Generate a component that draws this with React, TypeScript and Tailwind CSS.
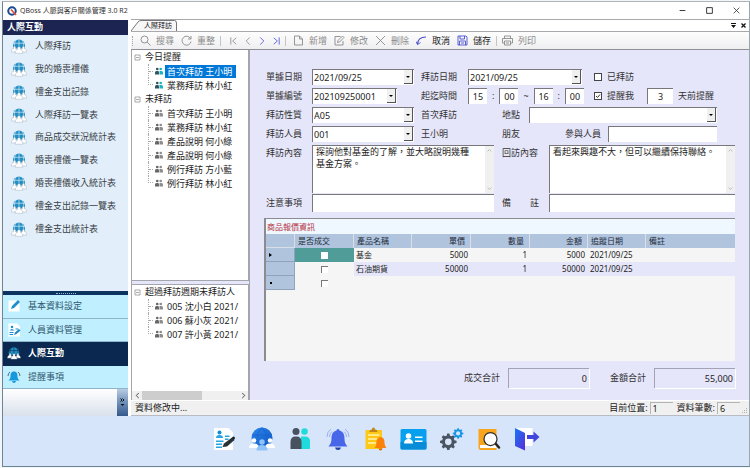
import React from "react";

const FONT = "font-['Noto_Sans','Noto_Sans_CJK_TC',sans-serif]";

/* ---------- icons ---------- */

function GlobeTeam({ className, globe = "#1f8fc4", people = "#ffffff", edge = "#9aa9b5", mesh = "#e3effb" }: { className: string; globe?: string; people?: string; edge?: string; mesh?: string }) {
  return (
    <svg viewBox="0 0 32 30" className={className} aria-hidden="true">
      <path d="M4 14a12 12 0 0 1 24 0v6H4z" fill={globe} />
      <path d="M16 2v14M4 9.500h24M10 3.500c-3 4-3 7-3 11M22 3.500c3 4 3 7 3 11" stroke={mesh} strokeWidth="1.300" fill="none" />
      <g fill={people} stroke={edge} strokeWidth=".9">
        <path d="M.5 27c0-5 2-6 4.500-7-2-6 6-6 4 0 2 1 4 2 4 7z" />
        <path d="M19 27c0-5 2-6 4-7-2-6 6-6 4 0 2.500 1 4.500 2 4.500 7z" />
        <path d="M8.500 29.500c0-6 2-6.500 5-8-3-7 8-7 5 0 3 1.500 5 2 5 8z" />
      </g>
    </svg>
  );
}

function Pair({ color }: { color?: boolean }) {
  return (
    <svg viewBox="0 0 16 16" className="h-2 w-2 shrink-0" aria-hidden="true">
      <g fill={color ? "#19b5bf" : "#8d8d8d"}>
        <circle cx="11.500" cy="4" r="2.700" />
        <path d="M9 8h4q3 0 3 3v4H9z" />
      </g>
      <g fill={color ? "#35525f" : "#666"}>
        <circle cx="4.500" cy="4" r="2.700" />
        <path d="M0 11q0-3 3-3h3q2 0 2 3v4H0z" />
      </g>
    </svg>
  );
}

function Line({ children, className = "h-[11px] w-[11px]" }: { children: React.ReactNode; className?: string }) {
  return (
    <svg viewBox="0 0 22 22" className={className + " shrink-0"} fill="none" stroke="currentColor" strokeWidth="1.800" aria-hidden="true">
      {children}
    </svg>
  );
}

const toolIcons = {
  search: <><circle cx="9" cy="9" r="7" /><path d="m14 14 7 7" /></>,
  refresh: <><path d="M19 7a9 9 0 1 0 1 6" /><path d="M20 2v6h-6" /></>,
  first: <><path d="M4 3v16M16 4l-8 7 8 7" /></>,
  prev: <path d="m15 3-8 8 8 8" />,
  next: <path d="m7 3 8 8-8 8" />,
  last: <><path d="M18 3v16M6 4l8 7-8 7" /></>,
  add: <><path d="M3 2h10l6 6v12H3z" /><path d="M13 2v6h6" /></>,
  edit: <><path d="M13 3H2v17h16v-8" /><path d="m7 15 1-4 9-9 3 3-9 9z" /></>,
  remove: <path d="m2 2 18 18M20 2 2 20" />,
  undo: <><path d="M3 19C3 9 9 4 20 4" strokeWidth="2.400" /><path d="m0 13 3 6 6-4" /></>,
  save: <><path d="M2 2h16l2 2v16H2z" /><path d="M6 2v6h9V2M5 20v-8h12v8M8 16h6" /></>,
  print: <><path d="M5 7V2h12v5M5 16H1V7h20v9h-4" /><path d="M5 12h12v8H5zM8 16h6" /></>,
};

/* ---------- data ---------- */

const menu = ["人際拜訪", "我的婚喪禮儀", "禮金支出記錄", "人際拜訪一覽表", "商品成交狀況統計表", "婚喪禮儀一覽表", "婚喪禮儀收入統計表", "禮金支出記錄一覽表", "禮金支出統計表"];
const pending = ["首次拜訪 王小明", "業務拜訪 林小紅", "產品說明 何小綠", "產品說明 何小綠", "例行拜訪 方小藍", "例行拜訪 林小紅"];
const overdue = ["005 沈小白 2021/", "006 蘇小灰 2021/", "007 許小黃 2021/"];
const products = [
  { name: "基金", price: "5000", qty: "1", total: "5000", date: "2021/09/25" },
  { name: "石油期貨", price: "50000", qty: "1", total: "50000", date: "2021/09/25" },
];

/* ---------- sidebar ---------- */

function Sidebar() {
  const groups = [
    {
      label: "基本資料設定",
      icon: <svg viewBox="0 0 28 28" className="h-3.5 w-3.5"><path d="M3 3h22v22H3z" fill="#fff" /><path d="m8 20 2-6L22 2l4 4-12 12z" fill="#1a8fd0" /></svg>,
    },
    {
      label: "人員資料管理",
      icon: <svg viewBox="0 0 28 28" className="h-3.5 w-3.5"><path d="M3 1h17l6 6v20H3z" fill="#fff" /><circle cx="10" cy="8" r="2.500" fill="#1a8fd0" /><path d="M5 15q5-6 10 0zM5 18h8v2H5zM5 22h7v2H5zM17 11h6v2h-6z" fill="#1a8fd0" /><path d="m14 24 2-5 8-7 3 3-8 7z" fill="#1c86c4" /></svg>,
    },
    {
      label: "人際互動",
      active: true,
      icon: <GlobeTeam className="h-3.5 w-3.5" edge="#0a2850" mesh="#0a2850" />,
    },
    {
      label: "提醒事項",
      icon: <svg viewBox="0 0 28 28" className="h-3.5 w-3.5"><path d="M14 3c6 0 7 5 7 10 0 4 2 6 4 8H3c2-2 4-4 4-8 0-5 1-10 7-10zM10 22h8q-1 4-4 4t-4-4z" fill="#1698dc" /><path d="M2 12q0-5 4-8M26 12q0-5-4-8" stroke="#4f6a7c" strokeWidth="2" fill="none" /></svg>,
    },
  ];
  return (
    <aside className="flex w-[125px] shrink-0 flex-col">
      <h2 className="mt-px h-[15px] bg-[#1c2552] px-1 text-[9px] font-bold leading-[14px] text-white">人際互動</h2>
      <nav className="flex flex-1 flex-col bg-[#e2effb]">
        <ul className="grid h-[205px] grid-rows-9">
          {menu.map((m) => (
            <li key={m} className="flex items-center">
              <a href="#" className="flex items-center gap-2 pl-2">
                <GlobeTeam className="h-4 w-4" />
                {m}
              </a>
            </li>
          ))}
        </ul>
      </nav>
      <div className="flex h-1 items-center justify-center bg-[#0b3560]">
        <div className="w-5 border-t border-dotted border-[#9db8d2]" />
      </div>
      <div className="grid h-[94px] grid-rows-4">
        {groups.map((g) => (
          <button
            key={g.label}
            className={
              "flex items-center gap-[7px] border-b pl-1 text-left " +
              (g.active ? "border-[#0a2850] bg-[#0a2850] font-bold text-white" : "border-[#8fb4cc] bg-[#c0f0ff] text-[#31576e]")
            }
          >
            {g.icon}
            {g.label}
          </button>
        ))}
      </div>
      <div className="flex h-[27px] justify-end bg-linear-to-b from-white to-[#d9e1ec]">
        <button aria-label="更多" className="flex w-[11px] items-center justify-center bg-linear-to-b from-[#b9cce4] via-[#6e8fb8] to-[#33588a]">
          <svg viewBox="0 0 10 18" className="h-[9px] w-[5px]"><path d="m1 1 3 3-3 3M5 1l3 3-3 3" stroke="#111" strokeWidth="2" fill="none" /><path d="M1 12h8l-4 4z" fill="#111" /></svg>
        </button>
      </div>
    </aside>
  );
}

/* ---------- tree ---------- */

function Branch({ title, items, color, selected }: { title: string; items: string[]; color?: boolean; selected?: number }) {
  return (
    <li>
      <div className="flex h-3.5 items-center gap-1 pl-0.5">
        <svg viewBox="0 0 14 14" className="h-[7px] w-[7px] shrink-0"><path d="M2 2h10v10H2zM4 7h6" fill="none" stroke="#8c8c8c" strokeWidth="1.500" /></svg>
        <span className="whitespace-nowrap text-[#222]">{title}</span>
      </div>
      <ul className="ml-4">
        {items.map((t, i) => (
          <li key={i} className="flex h-3.5 items-center">
            <span className={"flex w-[5px] shrink-0 flex-col border-l border-dotted border-[#aaa] " + (i === items.length - 1 ? "h-[7px] self-start border-b" : "h-full")}>
              {i < items.length - 1 && <span className="mt-[7px] border-t border-dotted border-[#aaa]" />}
            </span>
            <span className="ml-0.5 flex w-2.5 shrink-0"><Pair color={color} /></span>
            <button className={"h-[13px] whitespace-nowrap px-0.5 leading-[13px] " + (selected === i ? "bg-[#0078d7] pr-1 text-white" : "text-[#222]")}>{t}</button>
          </li>
        ))}
      </ul>
    </li>
  );
}

function Trees() {
  return (
    <div className="flex w-[119px] shrink-0 flex-col border-x border-[#a5a5ad] bg-[#e6e6fa]">
      <ul className="flex-1 overflow-hidden border-b border-r border-[#a5a5ad] bg-white">
        <Branch title="今日提醒" items={pending.slice(0, 2)} color selected={0} />
        <Branch title="未拜訪" items={pending} />
      </ul>
      <div className="mt-[3px] flex h-[116px] flex-col border-r border-t border-[#a5a5ad] bg-white">
        <ul className="flex-1 overflow-hidden">
          <Branch title="超過拜訪週期未拜訪人" items={overdue} />
        </ul>
        <div className="flex h-[9px] items-stretch bg-[#f0f0f0] text-[#444]">
          <button aria-label="向左捲動" className="flex w-2.5 items-center justify-center"><Line className="h-[7px] w-[7px]"><path d="m15 3-8 8 8 8" strokeWidth="3" /></Line></button>
          <div className="flex-1"><div className="h-full w-[63%] bg-[#cdcdcd]" /></div>
          <button aria-label="向右捲動" className="flex w-2.5 items-center justify-center"><Line className="h-[7px] w-[7px]"><path d="m7 3 8 8-8 8" strokeWidth="3" /></Line></button>
        </div>
      </div>
    </div>
  );
}

/* ---------- form controls ---------- */

const FIELD = "border-l border-t border-[#77777c] bg-white text-[#222] outline-none";

function Combo({ label, value, className }: { label: string; value: string; className: string }) {
  return (
    <div className={"relative h-4 " + className}>
      <select aria-label={label} defaultValue={value} className={"block h-full w-full appearance-none pl-px pr-2.5 " + FIELD}>
        <option>{value}</option>
      </select>
      <span className="pointer-events-none absolute bottom-px right-px top-px flex w-[9px] items-center justify-center border-b border-r border-[#555] bg-[#f0f0f0]">
        <span className="border-x-2 border-t-2 border-x-transparent border-t-black" />
      </span>
    </div>
  );
}

function Box({ label, value, className }: { label: string; value?: string; className: string }) {
  return <input aria-label={label} defaultValue={value} className={"h-4 min-w-0 " + FIELD + " " + className} />;
}

function Memo({ label, value }: { label: string; value: string }) {
  return (
    <div className={"flex h-12 min-w-0 flex-1 " + FIELD}>
      <textarea aria-label={label} defaultValue={value} className="block h-full min-w-0 flex-1 resize-none overflow-hidden pl-[3px] pr-2.5 leading-3 outline-none" />
      <div className="flex w-[9px] shrink-0 flex-col items-center justify-between bg-[#f0f0f0] py-0.5 text-[#a5a5a5]">
        <Line className="h-[5px] w-[7px]"><path d="m3 15 8-8 8 8" strokeWidth="3" /></Line>
        <Line className="h-[5px] w-[7px]"><path d="m3 7 8 8 8-8" strokeWidth="3" /></Line>
      </div>
    </div>
  );
}

function Check({ label, checked }: { label: string; checked?: boolean }) {
  return (
    <label className="flex items-center gap-[5px]">
      <span className="relative flex h-2 w-2">
        <input type="checkbox" defaultChecked={checked} className="peer block h-2 w-2 appearance-none border border-[#444] bg-white" />
        <svg viewBox="0 0 16 16" className="pointer-events-none absolute inset-0 hidden h-2 w-2 peer-checked:block"><path d="m4 8 3 3 5-6" fill="none" stroke="#333" strokeWidth="2" /></svg>
      </span>
      {label}
    </label>
  );
}

const LABEL = "w-[46px] shrink-0";
const ROW = "flex items-center";

function ProductTable() {
  const head = "border-r border-[#d9dfe8] font-normal";
  const side = "border-b border-r border-[#8fa3bd] bg-[#b0c4de]";
  return (
    <section className="-ml-0.5 mt-1.5 flex min-h-[143px] flex-1 flex-col border-l-2 border-t border-[#8b8b90] bg-[#f5f5f5] text-[8px] leading-3">
      <h3 className="h-[15px] bg-[#eff8ff] pl-px leading-[16px] text-[#b5303c]">商品報價資訊</h3>
      <table className="w-full table-fixed border-separate border-spacing-0">
        <colgroup>
          <col className="w-[29px]" />
          <col className="w-[59px]" />
          <col className="w-[58px]" />
          <col className="w-[59px]" />
          <col className="w-[59px]" />
          <col className="w-[58px]" />
          <col className="w-[58px]" />
          <col />
        </colgroup>
        <thead>
          <tr className="h-3.5 bg-[#b0c4de] text-left text-[#222b3a]">
            <th className={head + " border-b"} />
            <th className={head + " pl-[3px]"}>是否成交</th>
            <th className={head + " pl-[3px]"}>產品名稱</th>
            <th className={head + " pr-[5px] text-right"}>單價</th>
            <th className={head + " pr-[5px] text-right"}>數量</th>
            <th className={head + " pr-[5px] text-right"}>金額</th>
            <th className={head + " pl-[3px]"}>追蹤日期</th>
            <th className="pl-[3px] font-normal">備註</th>
          </tr>
        </thead>
        <tbody>
          {products.map((p, i) => (
            <tr key={p.name} className={"h-3.5 text-[#222] " + (i ? "bg-[#e6e6fa]" : "bg-[#f5f5f5]")}>
              <td className={side}>{i === 0 && <span className="ml-[3px] block w-0 border-y-2 border-l-[3px] border-y-transparent border-l-black" />}</td>
              <td className={i ? "bg-[#f5f5f5]" : "bg-[#4f9c98]"}>
                <input type="checkbox" aria-label={p.name + " 是否成交"} className={"mx-auto block h-[7px] w-[7px] appearance-none bg-white " + (i ? "border-l border-t border-[#777]" : "")} />
              </td>
              <td className="pl-0.5">{p.name}</td>
              <td className="pr-[3px] text-right">{p.price}</td>
              <td className="pr-[3px] text-right">{p.qty}</td>
              <td className="pr-[3px] text-right">{p.total}</td>
              <td className="pl-0.5">{p.date}</td>
              <td />
            </tr>
          ))}
          <tr className="h-3.5">
            <td className={side}><span className="ml-1 block h-0.5 w-0.5 bg-black" /></td>
            <td><input type="checkbox" aria-label="新列 是否成交" className="mx-auto block h-[7px] w-[7px] appearance-none border-l border-t border-[#777] bg-white" /></td>
            <td colSpan={6} />
          </tr>
        </tbody>
      </table>
    </section>
  );
}

function VisitForm() {
  const total = "h-5 w-[81px] border-l border-t border-[#a3a3b5] bg-[#e6e6fa] pr-0.5 text-right text-[#222] outline-none shadow-[1px_1px_0_#fff]";
  return (
    <form className="flex min-w-0 flex-1 flex-col bg-[#e6e6fa] pb-3 pl-4 pr-3.5 pt-[19px] text-[#333]">
      <div className="flex flex-col gap-[3px]">
        <div className={ROW}>
          <span className={LABEL}>單據日期</span>
          <Combo label="單據日期" value="2021/09/25" className="w-[102px]" />
          <span className="ml-[7px] w-[47px]">拜訪日期</span>
          <Combo label="拜訪日期" value="2021/09/25" className="w-[114px]" />
          <div className="ml-3"><Check label="已拜訪" /></div>
        </div>
        <div className={ROW}>
          <span className={LABEL}>單據編號</span>
          <Combo label="單據編號" value="202109250001" className="w-[85px]" />
          <span className="ml-6 w-[47px]">起迄時間</span>
          <div className="flex w-[116px] items-center justify-between">
            <Box label="起時" value="15" className="w-[19px] text-center" />:
            <Box label="起分" value="00" className="w-[19px] text-center" />~
            <Box label="迄時" value="16" className="w-[19px] text-center" />:
            <Box label="迄分" value="00" className="w-[19px] text-center" />
          </div>
          <div className="ml-2.5"><Check label="提醒我" checked /></div>
          <Box label="提醒天數" value="3" className="ml-[13px] w-[26px] text-center" />
          <span className="ml-[5px]">天前提醒</span>
        </div>
        <div className={ROW}>
          <span className={LABEL}>拜訪性質</span>
          <Combo label="拜訪性質" value="A05" className="w-[102px]" />
          <span className="ml-[7px] w-[81px]">首次拜訪</span>
          <span className="w-[27px]">地點</span>
          <Combo label="地點" value="" className="mr-[18px] min-w-0 flex-1" />
        </div>
        <div className={ROW}>
          <span className={LABEL}>拜訪人員</span>
          <Combo label="拜訪人員" value="001" className="w-[102px]" />
          <span className="ml-[7px] w-[81px]">王小明</span>
          <span className="w-[63px]">朋友</span>
          <span className="w-[43px]">參與人員</span>
          <Box label="參與人員" className="mr-[18px] flex-1" />
        </div>
        <div className="flex flex-col gap-px">
          <div className="flex items-start">
            <div className="flex w-[228px] items-start">
              <span className={LABEL}>拜訪內容</span>
              <Memo label="拜訪內容" value="探詢他對基金的了解，並大略說明幾種基金方案。" />
            </div>
            <div className="ml-2 flex min-w-0 flex-1 items-start">
              <span className="w-[47px] shrink-0">回訪內容</span>
              <Memo label="回訪內容" value="看起來興趣不大，但可以繼續保持聯絡。" />
            </div>
          </div>
          <div className="flex items-center">
            <div className="flex h-[18px] w-[228px] items-center">
              <span className={LABEL}>注意事項</span>
              <input aria-label="注意事項" className={"h-full min-w-0 flex-1 " + FIELD} />
            </div>
            <div className="ml-2 flex h-[18px] min-w-0 flex-1 items-center">
              <span className="flex w-[47px] shrink-0 justify-between pr-2.5"><span>備</span><span>註</span></span>
              <input aria-label="備註" className={"h-full min-w-0 flex-1 " + FIELD} />
            </div>
          </div>
        </div>
      </div>
      <ProductTable />
      <div className="mt-[7px] flex items-center justify-end">
        <label className="flex items-center gap-2">成交合計<input readOnly value="0" className={total} /></label>
        <label className="ml-[21px] flex items-center gap-2">金額合計<input readOnly value="55,000" className={total} /></label>
      </div>
    </form>
  );
}

/* ---------- toolbar ---------- */

function Tool({ icon, label, tone = "text-[#8b8b8b]", textTone = "text-[#8b8b8b]" }: { icon: React.ReactNode; label: string; tone?: string; textTone?: string }) {
  return (
    <button className="flex items-center gap-[5px]">
      <span className={tone}><Line>{icon}</Line></span>
      <span className={"whitespace-nowrap " + textTone}>{label}</span>
    </button>
  );
}

function Toolbar() {
  const sep = <span className="h-2.5 border-l border-[#c4c4c4]" />;
  const blue = "text-[#4a4fd0]";
  return (
    <div className="flex h-[18px] items-center gap-[7px] border-b border-[#8f8f96] bg-linear-to-b from-[#fdfdfd] to-[#efeff1] pl-px">
      <span className="h-2.5 border-l border-dotted border-[#a5a5a5]" />
      <Tool icon={toolIcons.search} label="搜尋" />
      <Tool icon={toolIcons.refresh} label="重整" />
      <div className="-ml-0.5 flex w-[66px] items-center justify-between">
        {sep}
        <button aria-label="第一筆" className="ml-1 text-[#8b8b8b]"><Line className="block h-2.5 w-2.5">{toolIcons.first}</Line></button>
        <button aria-label="上一筆" className="text-[#8b8b8b]"><Line className="block h-2.5 w-2.5">{toolIcons.prev}</Line></button>
        <button aria-label="下一筆" className={blue}><Line className="block h-2.5 w-2.5">{toolIcons.next}</Line></button>
        <button aria-label="最後一筆" className={blue}><Line className="block h-2.5 w-2.5">{toolIcons.last}</Line></button>
        {sep}
      </div>
      <Tool icon={toolIcons.add} label="新增" />
      <Tool icon={toolIcons.edit} label="修改" />
      <Tool icon={toolIcons.remove} label="刪除" />
      <Tool icon={toolIcons.undo} label="取消" tone={blue} textTone="text-[#222]" />
      <Tool icon={toolIcons.save} label="儲存" tone={blue} textTone="text-[#222]" />
      <div className="-ml-0.5 flex items-center gap-[5px]">
        {sep}
        <Tool icon={toolIcons.print} label="列印" />
      </div>
    </div>
  );
}

/* ---------- dock ---------- */

const GEAR = "M14 2h4l1 4 3 1 3-2 3 3-2 3 1 3 4 1v4l-4 1-1 3 2 3-3 3-3-2-3 1-1 4h-4l-1-4-3-1-3 2-3-3 2-3-1-3-4-1v-4l4-1 1-3-2-3 3-3 3 2 3-1zM16 11a6 6 0 1 0 0 12 6 6 0 0 0 0-12z";

const dock: { label: string; art: React.ReactNode }[] = [
  {
    label: "基本資料",
    art: <><path d="M4 2h29l9 9v35H4z" fill="#fff" /><circle cx="15" cy="11" r="4" fill="#0f8fd8" /><path d="M8 22q0-6 7-6t7 6zM8 27h15v3H8zM8 33h12v3H8zM8 39h12v3H8zM26 17h9v3h-9zM26 23h7v3h-7z" fill="#25a5e4" /><path d="m21 40 3-7 16-12 5 5-15 13z" fill="#263238" /><circle cx="43" cy="22" r="3" fill="#1c2429" /></>,
  },
  {
    label: "人際互動",
    art: <><defs><linearGradient id="globe" x1="0" y1="0" x2="1" y2="1"><stop offset="0" stopColor="#2c86ee" /><stop offset="1" stopColor="#0d56bf" /></linearGradient></defs><circle cx="24" cy="22" r="21" fill="url(#globe)" /><path d="M24 1q-11 10-10 22M24 1q10 10 10 22M4 16h40" stroke="#1b62cf" strokeWidth="1.500" fill="none" /><g fill="#fff"><circle cx="8" cy="27" r="4.500" /><path d="M-2 42q0-9 10-9t10 9z" /><circle cx="40" cy="27" r="4.500" /><path d="M30 42q0-9 10-9t10 9z" /></g><g fill="#8fc3f7"><circle cx="24" cy="30" r="5.500" /><path d="M13 47q0-11 11-11t11 11z" /></g></>,
  },
  {
    label: "人員",
    art: <><g fill="#1edbdc"><circle cx="33" cy="9" r="6.500" /><path d="M26 19h8q10 0 10 10v15H26z" /></g><g fill="#475160"><circle cx="16" cy="9" r="7" /><path d="M5 30q0-11 10-11h2q10 0 10 11v14H5z" /></g></>,
  },
  {
    label: "提醒",
    art: <><path d="M24 4q3 0 3 3c8 2 10 9 10 16 0 9 3 12 6 16H5c3-4 6-7 6-16 0-7 2-14 10-16q0-3 3-3z" fill="#4766e8" /><path d="M18 41h12q-1 5-6 5t-6-5z" fill="#2440a8" /><path d="M2 20q0-11 8-16M7 20q0-7 5-11M46 20q0-11-8-16M41 20q0-7-5-11" stroke="#92a7ee" strokeWidth="1.800" fill="none" /></>,
  },
  {
    label: "待辦提醒",
    art: <><path d="M3 6h33v38H3z" fill="#fdc916" /><path d="M11 10q0-5 5-5 0-4 3-4t3 4q5 0 5 5z" fill="#bf8416" /><path d="M8 16h23M8 24h23M8 32h16" stroke="#fff3b0" strokeWidth="3" /><path d="M33 20c7 1 8 6 8 11 0 6 2 8 4 11H21c2-3 4-5 4-11 0-5 1-10 8-11z" fill="#fb8108" /><path d="M29 43h8q-1 4-4 4t-4-4z" fill="#d66300" /></>,
  },
  {
    label: "名片",
    art: <><rect x="-3" y="4" width="52" height="41" rx="3" fill="#07a0ef" /><path d="M-3 30h52v12q0 3-3 3H0q-3 0-3-3z" fill="#078cd8" /><g fill="#fff"><circle cx="13" cy="18" r="5.500" /><path d="M4 33q0-9 9-9t9 9zM26 19h15v3H26zM26 27h15v3H26z" /></g></>,
  },
  {
    label: "設定",
    art: <><g transform="translate(-1 11) scale(1.100)"><path d={GEAR} fill="#4a5362" fillRule="evenodd" /></g><g transform="translate(25 1) scale(.7)"><path d={GEAR} fill="#1495e6" fillRule="evenodd" /></g></>,
  },
  {
    label: "查詢",
    art: <><path d="M1 4h36v42H5q-4 0-4-5z" fill="#f8a51d" /><path d="M4 36h33v6H4z" fill="#fff" /><path d="m34 32 8 9" stroke="#222" strokeWidth="5" strokeLinecap="round" /><circle cx="25" cy="24" r="13" fill="#fff" stroke="#303030" strokeWidth="2.500" /></>,
  },
  {
    label: "離開",
    art: <><defs><linearGradient id="door" x1="0" y1="0" x2="1" y2="1"><stop offset="0" stopColor="#1778f5" /><stop offset="1" stopColor="#5a2bd8" /></linearGradient></defs><path d="M-1 2h34v36H-1z" fill="#fff" /><path d="m-2 2 20 10v35L-2 38z" fill="url(#door)" /><path d="M22 16h13V9l12 11-12 11v-7H22z" fill="#4045dd" /></>,
  },
];

export default function App() {
  return (
    <div className={"flex min-h-screen flex-col bg-[#f3f6f8] py-px pl-0.5 text-[9px] leading-[16px] text-[#3a3f45] " + FONT}>
      <div className="flex flex-1 flex-col border-b border-l border-r border-t border-[#6d8494] border-r-[#9aa6ad] border-t-[#aeb4b8] bg-white">
        <header className="flex h-[17px] items-center pl-1 text-[7px] text-[#333]">
          <svg viewBox="0 0 20 20" className="mr-[3px] h-2.5 w-2.5"><circle cx="10" cy="10" r="7.500" fill="#fff" stroke="#164b93" strokeWidth="4" /><path d="m8 7 10 11" stroke="#e75134" strokeWidth="3.500" /></svg>
          <h1>QBoss 人脈與客戶關係管理 3.0 R2</h1>
          <div className="ml-auto flex items-center gap-5 pr-[9px] text-[#333]">
            <button aria-label="最小化"><Line className="block h-[7px] w-[7px]"><path d="M2 11h18" strokeWidth="3" /></Line></button>
            <button aria-label="最大化"><Line className="block h-[7px] w-[7px]"><path d="M2 2h18v18H2z" strokeWidth="3" /></Line></button>
            <button aria-label="關閉"><Line className="block h-[7px] w-[7px]"><path d="m2 2 18 18M20 2 2 20" strokeWidth="2.500" /></Line></button>
          </div>
        </header>

        <div className="flex flex-1">
          <Sidebar />
          <main className="ml-[3px] flex min-w-0 flex-1 flex-col border-t border-[#a9a9ad]">
            <div className="flex h-3 items-end border-b border-[#a9a9ad] bg-white">
              <div className="relative flex h-[11px] w-[46px] items-center">
                <svg viewBox="0 0 46 11" className="absolute inset-0 h-full w-full" preserveAspectRatio="none"><path d="M0 11 7 2Q8 .5 10 .5H43.500Q45.500.5 45.500 3V11" fill="#f7f7f7" stroke="#777" /></svg>
                <button className="relative pl-[13px] text-[7px] leading-[11px] text-[#111]">人際拜訪</button>
              </div>
              <div className="ml-auto flex h-full items-center gap-[5px] pr-[3px]">
                <button aria-label="視窗清單"><svg viewBox="0 0 10 10" className="block h-[5px] w-[5px]"><path d="M0 0h10v2H0zM0 4h10L5 10z" fill="#111" /></svg></button>
                <button aria-label="關閉頁籤"><svg viewBox="0 0 10 10" className="block h-[5px] w-[5px]"><path d="m1 1 8 8M9 1 1 9" stroke="#111" strokeWidth="2.500" /></svg></button>
              </div>
            </div>
            <Toolbar />
            <div className="flex flex-1">
              <Trees />
              <VisitForm />
            </div>
            <footer className="flex h-4 items-center border-b border-t border-b-[#b8bcc2] border-t-white bg-[#f0f0f0] pl-1 pr-px text-[#222]">
              <span>資料修改中...</span>
              <span className="ml-auto">目前位置:</span>
              <span className="ml-0.5 h-3 w-[23px] border-l border-t border-[#b5b5b5] pl-0.5 leading-[12px]">1</span>
              <span className="ml-1">資料筆數:</span>
              <span className="ml-0.5 h-3 w-[23px] border-l border-t border-[#b5b5b5] pl-0.5 leading-[12px]">6</span>
              <svg viewBox="0 0 8 8" className="h-2 w-2 self-end" fill="#b0b0b0"><path d="M6 1h1v1H6zM4 3h1v1H4zM6 3h1v1H6zM2 5h1v1H2zM4 5h1v1H4zM6 5h1v1H6z" /></svg>
            </footer>
          </main>
        </div>

        <nav className="flex h-[50px] items-start justify-center gap-3.5 bg-[#d7e5fb] pt-[11px]">
          {dock.map((d) => (
            <button key={d.label} aria-label={d.label}>
              <svg viewBox="0 0 48 48" className="block h-6 w-6 overflow-visible">{d.art}</svg>
            </button>
          ))}
        </nav>
      </div>
    </div>
  );
}
